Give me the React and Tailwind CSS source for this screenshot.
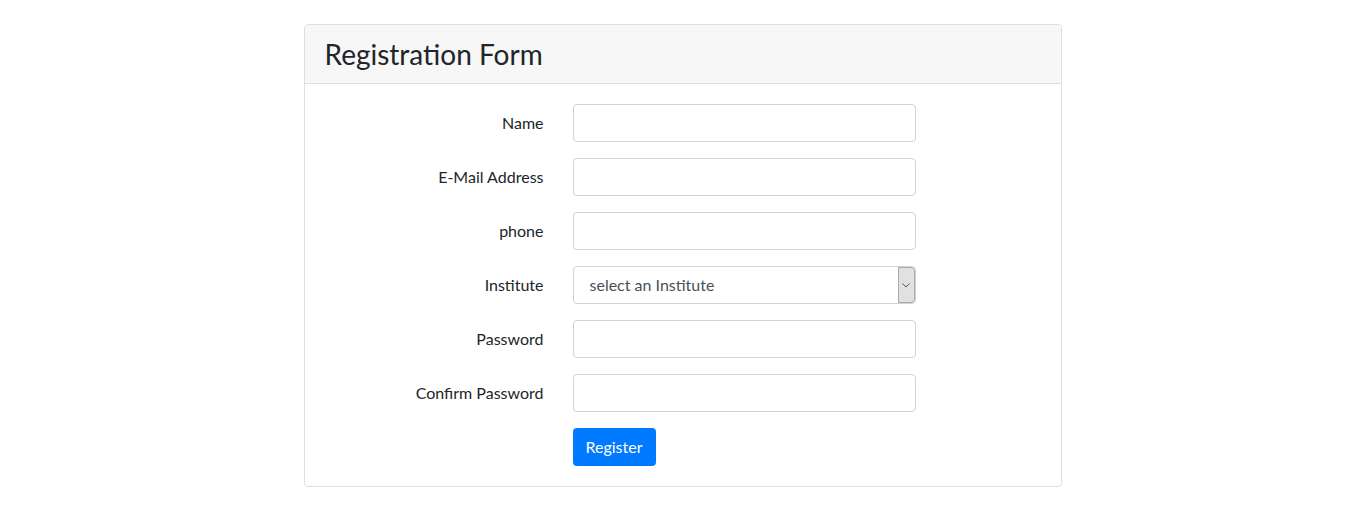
import React from 'react';

const fields = [
  { label: 'Name', type: 'text' },
  { label: 'E-Mail Address', type: 'email' },
  { label: 'phone', type: 'text' },
  { label: 'Institute', type: 'select' },
  { label: 'Password', type: 'password' },
  { label: 'Confirm Password', type: 'password' },
];

const App = () => {
  return (
    <div className="min-h-[510px] bg-white pt-6 font-['Lato',sans-serif] text-[#212529]">
      <div className="mx-auto w-[758px] rounded border border-[#dfdfdf] bg-white">
        <div className="h-[59px] rounded-t border-b border-[#dfdfdf] bg-[#f7f7f7] px-5 pt-3">
          <h3 className="text-[28px] leading-[34px] font-normal">Registration Form</h3>
        </div>
        <div className="p-5">
          {fields.map((f) => (
            <div key={f.label} className="mb-4 flex items-center">
              <label className="w-[219px] text-right text-base">{f.label}</label>
              <div className="ml-[29px] w-[343px]">
                {f.type === 'select' ? (
                  <div className="flex h-[38px] items-stretch rounded border border-[#ced4da] bg-white">
                    <span className="flex-1 pl-4 text-base leading-[36px] text-[#495057]">select an Institute</span>
                    <span className="flex w-[17px] items-center justify-center rounded-r border border-[#a9a9a9] bg-[#e1e1e1]">
                      <svg width="8" height="5" viewBox="0 0 8 5">
                        <path d="M0.5 0.5 L4 4 L7.5 0.5" fill="none" stroke="#555" strokeWidth="1" />
                      </svg>
                    </span>
                  </div>
                ) : (
                  <input
                    type={f.type}
                    className="block h-[38px] w-full rounded border border-[#ced4da] px-3 text-base outline-none"
                  />
                )}
              </div>
            </div>
          ))}
          <div className="flex">
            <div className="ml-[248px]">
              <button className="h-[38px] rounded bg-[#007bff] px-[13px] text-base text-white">Register</button>
            </div>
          </div>
        </div>
      </div>
    </div>
  );
};

export default App;
